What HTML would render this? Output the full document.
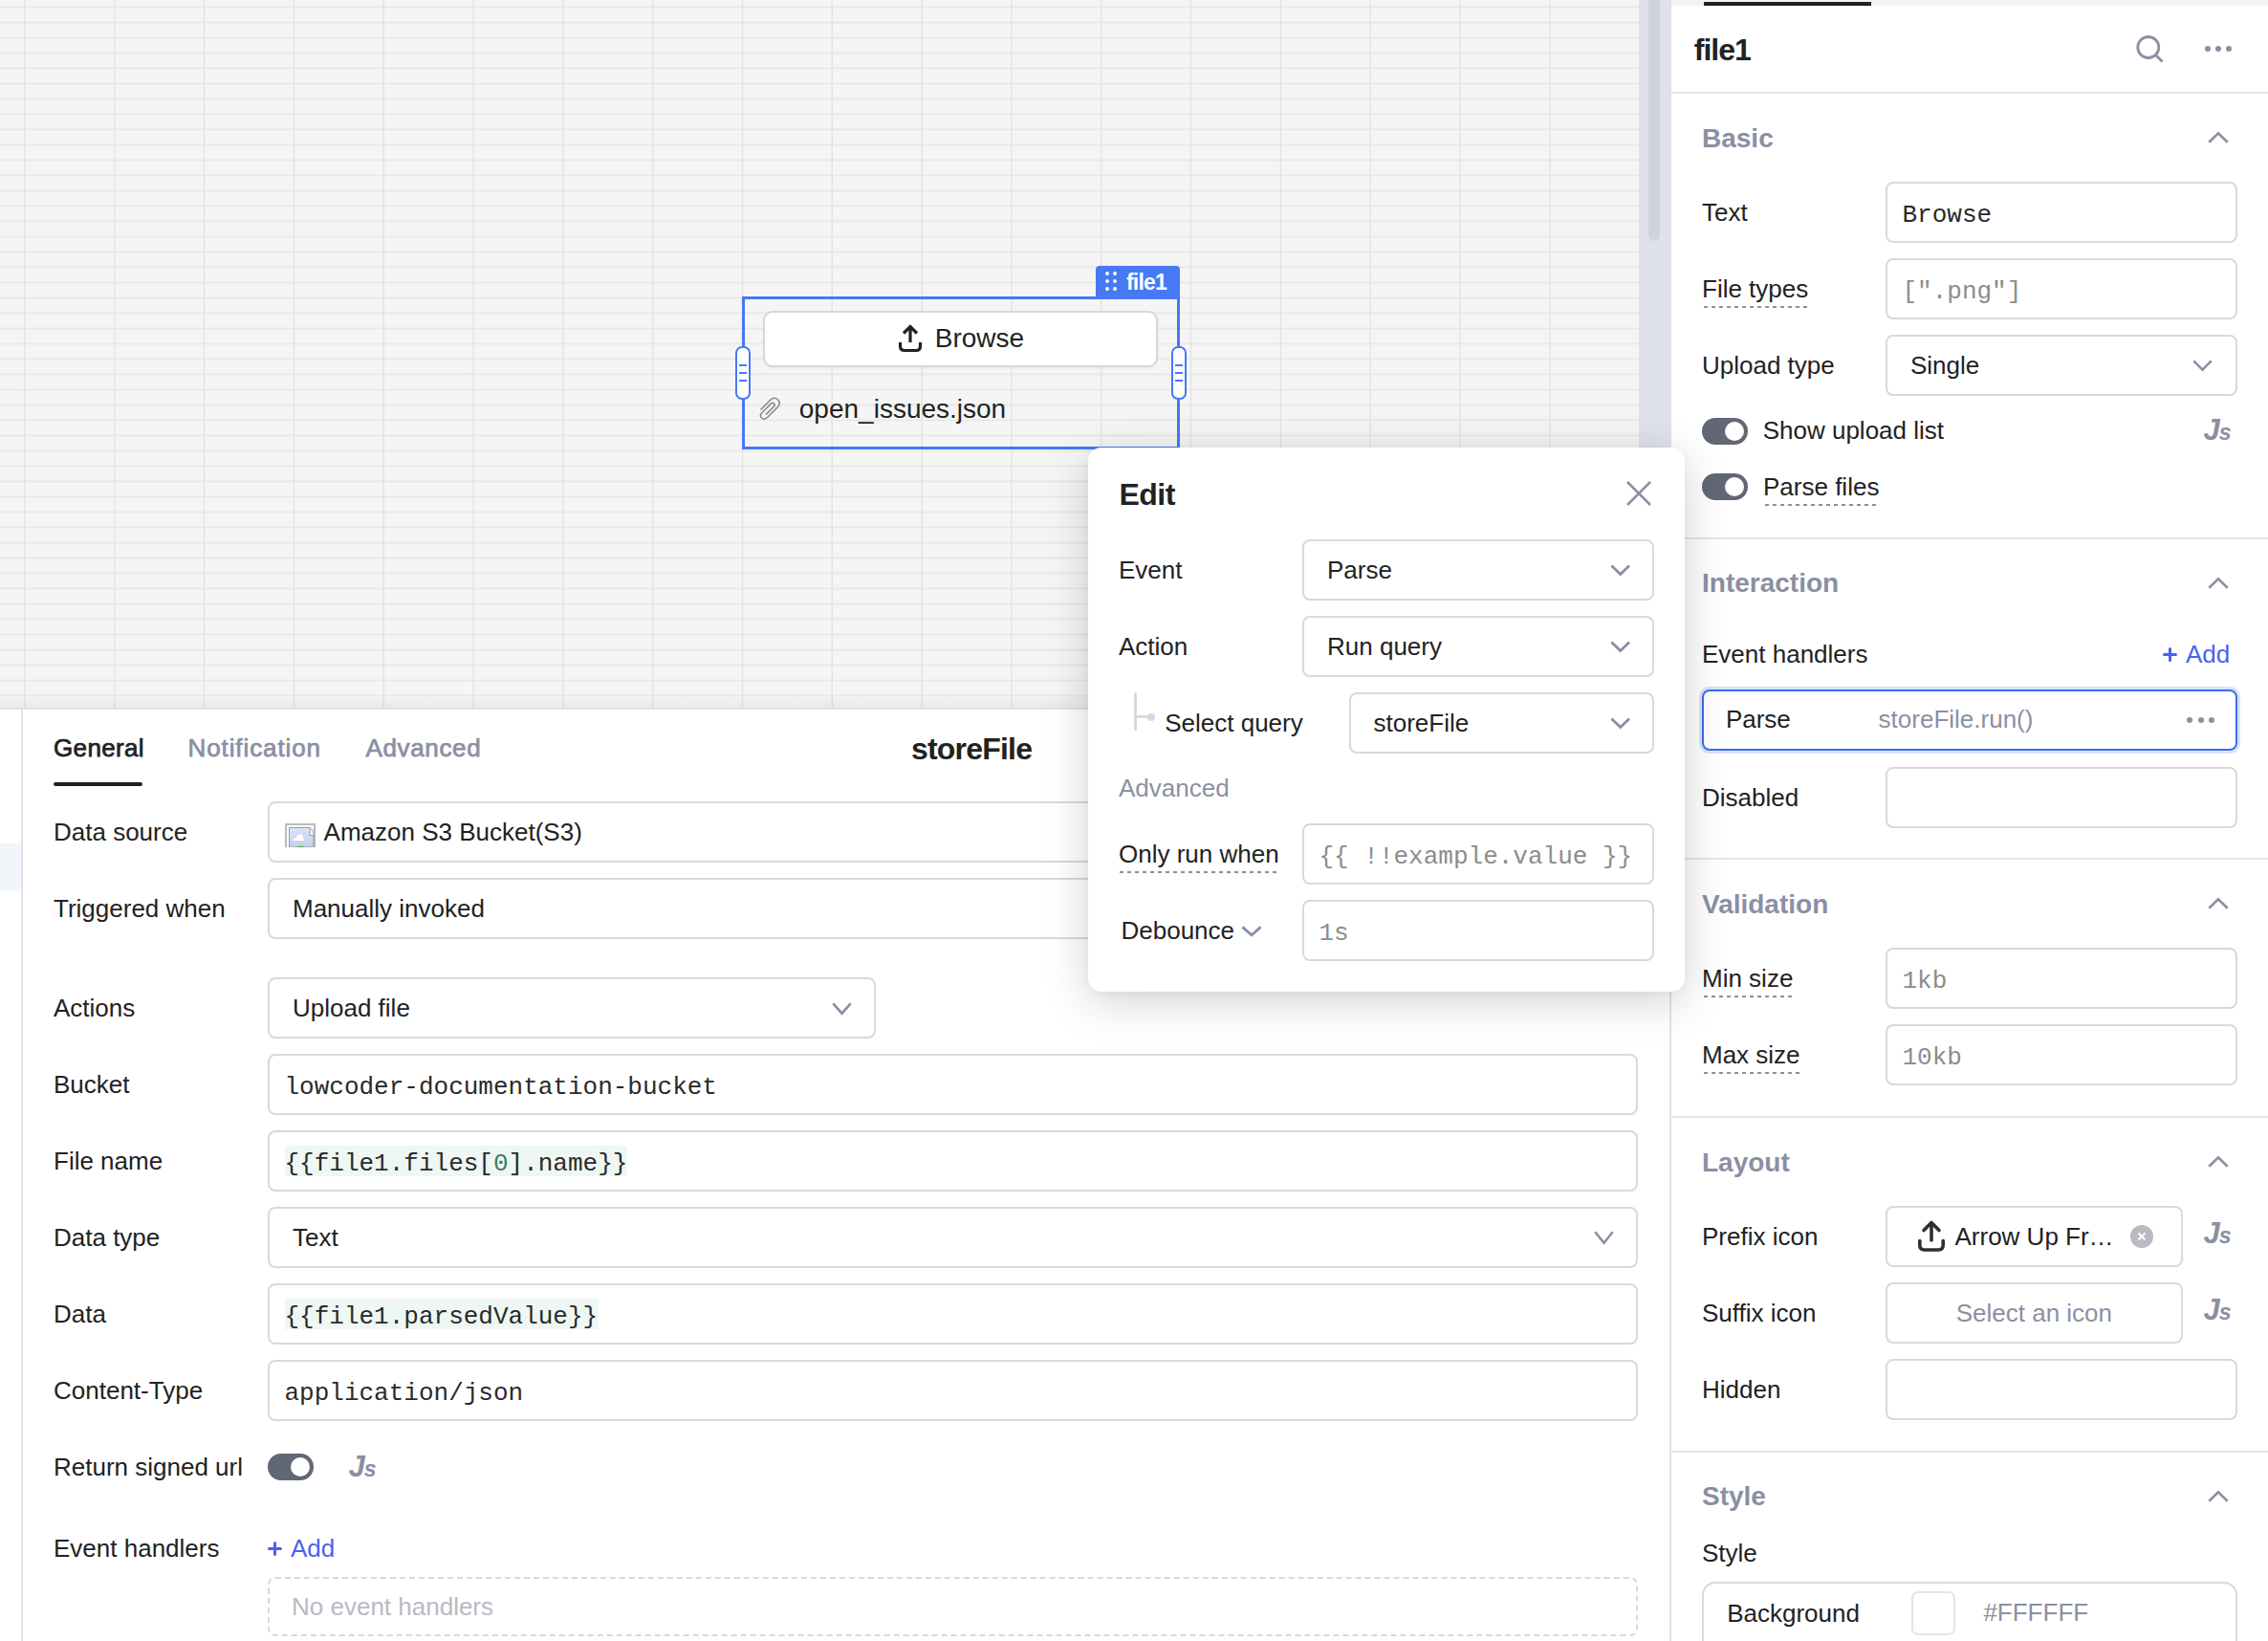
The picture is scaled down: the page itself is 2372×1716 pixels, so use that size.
<!DOCTYPE html><html><head><meta charset="utf-8"><style>html,body{margin:0;padding:0;width:2372px;height:1716px;overflow:hidden;background:#fff;position:relative}</style></head><body>
<div style="position:absolute;left:0.0px;top:0.0px;width:1714.0px;height:741.0px;background:#f5f5f5"></div>
<svg style="position:absolute;left:0;top:0" width="1714" height="741"><rect x="0" y="6.55" width="1714" height="1.8" fill="#e8e8e8"/><rect x="0" y="22.55" width="1714" height="1.8" fill="#e8e8e8"/><rect x="0" y="38.550000000000004" width="1714" height="1.8" fill="#e8e8e8"/><rect x="0" y="54.550000000000004" width="1714" height="1.8" fill="#e8e8e8"/><rect x="0" y="70.55" width="1714" height="1.8" fill="#e8e8e8"/><rect x="0" y="86.55" width="1714" height="1.8" fill="#e8e8e8"/><rect x="0" y="102.55" width="1714" height="1.8" fill="#e8e8e8"/><rect x="0" y="118.55" width="1714" height="1.8" fill="#e8e8e8"/><rect x="0" y="134.54999999999998" width="1714" height="1.8" fill="#e8e8e8"/><rect x="0" y="150.54999999999998" width="1714" height="1.8" fill="#e8e8e8"/><rect x="0" y="166.54999999999998" width="1714" height="1.8" fill="#e8e8e8"/><rect x="0" y="182.54999999999998" width="1714" height="1.8" fill="#e8e8e8"/><rect x="0" y="198.54999999999998" width="1714" height="1.8" fill="#e8e8e8"/><rect x="0" y="214.54999999999998" width="1714" height="1.8" fill="#e8e8e8"/><rect x="0" y="230.54999999999998" width="1714" height="1.8" fill="#e8e8e8"/><rect x="0" y="246.54999999999998" width="1714" height="1.8" fill="#e8e8e8"/><rect x="0" y="262.55" width="1714" height="1.8" fill="#e8e8e8"/><rect x="0" y="278.55" width="1714" height="1.8" fill="#e8e8e8"/><rect x="0" y="294.55" width="1714" height="1.8" fill="#e8e8e8"/><rect x="0" y="310.55" width="1714" height="1.8" fill="#e8e8e8"/><rect x="0" y="326.55" width="1714" height="1.8" fill="#e8e8e8"/><rect x="0" y="342.55" width="1714" height="1.8" fill="#e8e8e8"/><rect x="0" y="358.55" width="1714" height="1.8" fill="#e8e8e8"/><rect x="0" y="374.55" width="1714" height="1.8" fill="#e8e8e8"/><rect x="0" y="390.55" width="1714" height="1.8" fill="#e8e8e8"/><rect x="0" y="406.55" width="1714" height="1.8" fill="#e8e8e8"/><rect x="0" y="422.55" width="1714" height="1.8" fill="#e8e8e8"/><rect x="0" y="438.55" width="1714" height="1.8" fill="#e8e8e8"/><rect x="0" y="454.55" width="1714" height="1.8" fill="#e8e8e8"/><rect x="0" y="470.55" width="1714" height="1.8" fill="#e8e8e8"/><rect x="0" y="486.55" width="1714" height="1.8" fill="#e8e8e8"/><rect x="0" y="502.55" width="1714" height="1.8" fill="#e8e8e8"/><rect x="0" y="518.5500000000001" width="1714" height="1.8" fill="#e8e8e8"/><rect x="0" y="534.5500000000001" width="1714" height="1.8" fill="#e8e8e8"/><rect x="0" y="550.5500000000001" width="1714" height="1.8" fill="#e8e8e8"/><rect x="0" y="566.5500000000001" width="1714" height="1.8" fill="#e8e8e8"/><rect x="0" y="582.5500000000001" width="1714" height="1.8" fill="#e8e8e8"/><rect x="0" y="598.5500000000001" width="1714" height="1.8" fill="#e8e8e8"/><rect x="0" y="614.5500000000001" width="1714" height="1.8" fill="#e8e8e8"/><rect x="0" y="630.5500000000001" width="1714" height="1.8" fill="#e8e8e8"/><rect x="0" y="646.5500000000001" width="1714" height="1.8" fill="#e8e8e8"/><rect x="0" y="662.5500000000001" width="1714" height="1.8" fill="#e8e8e8"/><rect x="0" y="678.5500000000001" width="1714" height="1.8" fill="#e8e8e8"/><rect x="0" y="694.5500000000001" width="1714" height="1.8" fill="#e8e8e8"/><rect x="0" y="710.5500000000001" width="1714" height="1.8" fill="#e8e8e8"/><rect x="0" y="726.5500000000001" width="1714" height="1.8" fill="#e8e8e8"/><rect x="25.30" y="0" width="1.4" height="741" fill="#e3e3e3"/><rect x="119.11" y="0" width="1.4" height="741" fill="#e3e3e3"/><rect x="212.92" y="0" width="1.4" height="741" fill="#e3e3e3"/><rect x="306.73" y="0" width="1.4" height="741" fill="#e3e3e3"/><rect x="400.54" y="0" width="1.4" height="741" fill="#e3e3e3"/><rect x="494.35" y="0" width="1.4" height="741" fill="#e3e3e3"/><rect x="588.16" y="0" width="1.4" height="741" fill="#e3e3e3"/><rect x="681.97" y="0" width="1.4" height="741" fill="#e3e3e3"/><rect x="775.78" y="0" width="1.4" height="741" fill="#e3e3e3"/><rect x="869.59" y="0" width="1.4" height="741" fill="#e3e3e3"/><rect x="963.40" y="0" width="1.4" height="741" fill="#e3e3e3"/><rect x="1057.21" y="0" width="1.4" height="741" fill="#e3e3e3"/><rect x="1151.02" y="0" width="1.4" height="741" fill="#e3e3e3"/><rect x="1244.83" y="0" width="1.4" height="741" fill="#e3e3e3"/><rect x="1338.64" y="0" width="1.4" height="741" fill="#e3e3e3"/><rect x="1432.45" y="0" width="1.4" height="741" fill="#e3e3e3"/><rect x="1526.26" y="0" width="1.4" height="741" fill="#e3e3e3"/><rect x="1620.07" y="0" width="1.4" height="741" fill="#e3e3e3"/></svg>
<div style="position:absolute;left:0.0px;top:726.0px;width:1714.0px;height:14.0px;background:linear-gradient(to bottom,rgba(0,0,0,0),rgba(0,0,0,0.05))"></div>
<div style="position:absolute;left:1714.0px;top:0.0px;width:34.0px;height:741.0px;background:#dfe2ea"></div>
<div style="position:absolute;left:1724.0px;top:0.0px;width:12.0px;height:252.0px;background:#d0d3dc;border-radius:0 0 6px 6px"></div>
<div style="position:absolute;left:776.0px;top:310.0px;width:458.0px;height:160.0px;box-sizing:border-box;border:3px solid #4779f5"></div>
<div style="position:absolute;left:1146.0px;top:278.0px;width:88.0px;height:35.0px;background:#4779f5;border-radius:4px 4px 0 0"></div>
<div style="position:absolute;left:1156.0px;top:284.0px;width:4.0px;height:4.0px;background:#fff;border-radius:50%"></div>
<div style="position:absolute;left:1156.0px;top:292.0px;width:4.0px;height:4.0px;background:#fff;border-radius:50%"></div>
<div style="position:absolute;left:1156.0px;top:300.0px;width:4.0px;height:4.0px;background:#fff;border-radius:50%"></div>
<div style="position:absolute;left:1164.0px;top:284.0px;width:4.0px;height:4.0px;background:#fff;border-radius:50%"></div>
<div style="position:absolute;left:1164.0px;top:292.0px;width:4.0px;height:4.0px;background:#fff;border-radius:50%"></div>
<div style="position:absolute;left:1164.0px;top:300.0px;width:4.0px;height:4.0px;background:#fff;border-radius:50%"></div>
<div style="position:absolute;left:1178.0px;top:281.03px;font-family:'Liberation Sans', sans-serif;font-size:23px;line-height:28px;font-weight:bold;color:#fff;white-space:nowrap;letter-spacing:-0.8px">file1</div>
<div style="position:absolute;left:769.0px;top:362.0px;width:16.0px;height:56.0px;box-sizing:border-box;border:2px solid #4779f5;border-radius:7px;background:#fff"></div>
<div style="position:absolute;left:773.0px;top:381.0px;width:8.0px;height:2.0px;background:#4779f5"></div>
<div style="position:absolute;left:773.0px;top:389.0px;width:8.0px;height:2.0px;background:#4779f5"></div>
<div style="position:absolute;left:773.0px;top:397.0px;width:8.0px;height:2.0px;background:#4779f5"></div>
<div style="position:absolute;left:1225.0px;top:362.0px;width:16.0px;height:56.0px;box-sizing:border-box;border:2px solid #4779f5;border-radius:7px;background:#fff"></div>
<div style="position:absolute;left:1229.0px;top:381.0px;width:8.0px;height:2.0px;background:#4779f5"></div>
<div style="position:absolute;left:1229.0px;top:389.0px;width:8.0px;height:2.0px;background:#4779f5"></div>
<div style="position:absolute;left:1229.0px;top:397.0px;width:8.0px;height:2.0px;background:#4779f5"></div>
<div style="position:absolute;left:798.0px;top:324.5px;width:413.0px;height:59.0px;box-sizing:border-box;border:2px solid #d5d7de;border-radius:10px;background:#fff;box-shadow:0 2px 3px rgba(0,0,0,0.04)"></div>
<svg style="position:absolute;left:938px;top:338px" width="28" height="32"><path d="M14 4 L14 20 M7 10.5 L14 3.5 L21 10.5" fill="none" stroke="#222222" stroke-width="3.2" stroke-linecap="butt"/><path d="M3.5 20 L3.5 24 Q3.5 28.5 8 28.5 L20 28.5 Q24.5 28.5 24.5 24 L24.5 20" fill="none" stroke="#222222" stroke-width="3.2"/></svg>
<div style="position:absolute;left:977.8px;top:336.90px;font-family:'Liberation Sans', sans-serif;font-size:28px;line-height:34px;font-weight:normal;color:#222222;white-space:nowrap;">Browse</div>
<svg style="position:absolute;left:793px;top:414px" width="26" height="28" viewBox="0 0 26 28"><path d="M2.5 14.5 L13 4 Q17 0.5 20.5 4 Q24 7.5 20.5 11.5 L9.5 22.5 Q6 25.5 3.5 23 Q1 20.5 4 17.5 L13.5 8 Q15 6.5 16.5 8 Q18 9.5 16.5 11 L8 19.5" fill="none" stroke="#8a8a8a" stroke-width="1.6"/></svg>
<div style="position:absolute;left:835.8px;top:410.90px;font-family:'Liberation Sans', sans-serif;font-size:28px;line-height:34px;font-weight:normal;color:#222222;white-space:nowrap;">open_issues.json</div>
<div style="position:absolute;left:0.0px;top:741.0px;width:1748.0px;height:975.0px;background:#fff"></div>
<div style="position:absolute;left:0.0px;top:740.0px;width:1748.0px;height:2.0px;background:#dfe2ea"></div>
<div style="position:absolute;left:22.0px;top:742.0px;width:2.0px;height:974.0px;background:#dfe2ea"></div>
<div style="position:absolute;left:0.0px;top:882.0px;width:22.0px;height:50.0px;background:#f2f5fa"></div>
<div style="position:absolute;left:56.0px;top:765.99px;font-family:'Liberation Sans', sans-serif;font-size:26px;line-height:32px;font-weight:normal;color:#222222;white-space:nowrap;letter-spacing:0.35px;-webkit-text-stroke:0.75px #222222">General</div>
<div style="position:absolute;left:196.5px;top:765.99px;font-family:'Liberation Sans', sans-serif;font-size:26px;line-height:32px;font-weight:normal;color:#8b8fa3;white-space:nowrap;letter-spacing:0.9px;-webkit-text-stroke:0.75px #8b8fa3">Notification</div>
<div style="position:absolute;left:382.5px;top:765.99px;font-family:'Liberation Sans', sans-serif;font-size:26px;line-height:32px;font-weight:normal;color:#8b8fa3;white-space:nowrap;letter-spacing:0.65px;-webkit-text-stroke:0.75px #8b8fa3">Advanced</div>
<div style="position:absolute;left:56.0px;top:818.0px;width:93.0px;height:4.0px;background:#222222;border-radius:2px"></div>
<div style="position:absolute;left:953.0px;top:763.91px;font-family:'Liberation Sans', sans-serif;font-size:32px;line-height:39px;font-weight:bold;color:#222222;white-space:nowrap;letter-spacing:-0.8px">storeFile</div>
<div style="position:absolute;left:56.0px;top:853.89px;font-family:'Liberation Sans', sans-serif;font-size:26px;line-height:32px;font-weight:normal;color:#222222;white-space:nowrap;">Data source</div>
<div style="position:absolute;left:280.0px;top:838.0px;width:1433.0px;height:64.0px;box-sizing:border-box;border:2px solid #d7d9e0;border-radius:8px;background:#fff;"></div>
<svg style="position:absolute;left:297px;top:860px" width="34" height="26" viewBox="0 0 34 26"><defs><linearGradient id="dsg" x1="0" y1="0" x2="0" y2="1"><stop offset="0" stop-color="#d9e5f9"/><stop offset="1" stop-color="#c3d0ee"/></linearGradient></defs><path d="M2 26 V2 H32 V26" fill="none" stroke="#bcbcbc" stroke-width="2"/><path d="M5.5 26 V5.5 H27 L31 9.5 V26 Z" fill="url(#dsg)" stroke="#9a9a9a" stroke-width="1"/><path d="M27 5.5 V13.5 H31" fill="#fff" stroke="#9a9a9a" stroke-width="1"/><path d="M9 19 Q10 16 13 15.5 Q14.5 12 17.5 12.5 Q20.5 13 20 17 Q21.5 17.5 21 19 Z" fill="#fff"/><ellipse cx="17.5" cy="26" rx="4.5" ry="1.2" fill="#6aab4a"/></svg>
<div style="position:absolute;left:338.6px;top:853.79px;font-family:'Liberation Sans', sans-serif;font-size:26px;line-height:32px;font-weight:normal;color:#222222;white-space:nowrap;">Amazon S3 Bucket(S3)</div>
<div style="position:absolute;left:56.0px;top:933.89px;font-family:'Liberation Sans', sans-serif;font-size:26px;line-height:32px;font-weight:normal;color:#222222;white-space:nowrap;">Triggered when</div>
<div style="position:absolute;left:280.0px;top:918.0px;width:1433.0px;height:64.0px;box-sizing:border-box;border:2px solid #d7d9e0;border-radius:8px;background:#fff;"></div>
<div style="position:absolute;left:306.0px;top:933.89px;font-family:'Liberation Sans', sans-serif;font-size:26px;line-height:32px;font-weight:normal;color:#222222;white-space:nowrap;">Manually invoked</div>
<div style="position:absolute;left:56.0px;top:1037.89px;font-family:'Liberation Sans', sans-serif;font-size:26px;line-height:32px;font-weight:normal;color:#222222;white-space:nowrap;">Actions</div>
<div style="position:absolute;left:280.0px;top:1022.0px;width:636.0px;height:64.0px;box-sizing:border-box;border:2px solid #d7d9e0;border-radius:8px;background:#fff;"></div>
<div style="position:absolute;left:306.0px;top:1037.89px;font-family:'Liberation Sans', sans-serif;font-size:26px;line-height:32px;font-weight:normal;color:#222222;white-space:nowrap;">Upload file</div>
<svg style="position:absolute;left:868.0px;top:1046.0px" width="25.0" height="17.0"><polyline points="3.3,3.3 12.5,13.7 21.7,3.3" fill="none" stroke="#8b8fa3" stroke-width="2.6"/></svg>
<div style="position:absolute;left:56.0px;top:1117.89px;font-family:'Liberation Sans', sans-serif;font-size:26px;line-height:32px;font-weight:normal;color:#222222;white-space:nowrap;">Bucket</div>
<div style="position:absolute;left:280.0px;top:1102.0px;width:1433.0px;height:64.0px;box-sizing:border-box;border:2px solid #d7d9e0;border-radius:8px;background:#fff;"></div>
<div style="position:absolute;left:297.5px;top:1120.98px;font-family:'Liberation Mono', monospace;font-size:26px;line-height:32px;font-weight:normal;color:#2a2a2a;white-space:nowrap;">lowcoder-documentation-bucket</div>
<div style="position:absolute;left:56.0px;top:1197.89px;font-family:'Liberation Sans', sans-serif;font-size:26px;line-height:32px;font-weight:normal;color:#222222;white-space:nowrap;">File name</div>
<div style="position:absolute;left:280.0px;top:1182.0px;width:1433.0px;height:64.0px;box-sizing:border-box;border:2px solid #d7d9e0;border-radius:8px;background:#fff;"></div>
<div style="position:absolute;left:298.4px;top:1197.6px;width:357.6px;height:32.8px;background:#eef7f3"></div>
<div style="position:absolute;left:297.5px;top:1200.98px;font-family:'Liberation Mono', monospace;font-size:26px;line-height:32px;font-weight:normal;color:#2a2a2a;white-space:nowrap;">{{file1.files[<span style="color:#3a7d5c">0</span>].name}}</div>
<div style="position:absolute;left:56.0px;top:1277.89px;font-family:'Liberation Sans', sans-serif;font-size:26px;line-height:32px;font-weight:normal;color:#222222;white-space:nowrap;">Data type</div>
<div style="position:absolute;left:280.0px;top:1262.0px;width:1433.0px;height:64.0px;box-sizing:border-box;border:2px solid #d7d9e0;border-radius:8px;background:#fff;"></div>
<div style="position:absolute;left:306.0px;top:1277.89px;font-family:'Liberation Sans', sans-serif;font-size:26px;line-height:32px;font-weight:normal;color:#222222;white-space:nowrap;">Text</div>
<svg style="position:absolute;left:1665.0px;top:1285.0px" width="25.0" height="18.0"><polyline points="3.3,3.3 12.5,14.7 21.7,3.3" fill="none" stroke="#8b8fa3" stroke-width="2.6"/></svg>
<div style="position:absolute;left:56.0px;top:1357.89px;font-family:'Liberation Sans', sans-serif;font-size:26px;line-height:32px;font-weight:normal;color:#222222;white-space:nowrap;">Data</div>
<div style="position:absolute;left:280.0px;top:1342.0px;width:1433.0px;height:64.0px;box-sizing:border-box;border:2px solid #d7d9e0;border-radius:8px;background:#fff;"></div>
<div style="position:absolute;left:298.4px;top:1357.6px;width:327.3px;height:32.8px;background:#eef7f3"></div>
<div style="position:absolute;left:297.5px;top:1360.98px;font-family:'Liberation Mono', monospace;font-size:26px;line-height:32px;font-weight:normal;color:#2a2a2a;white-space:nowrap;">{{file1.parsedValue}}</div>
<div style="position:absolute;left:56.0px;top:1437.89px;font-family:'Liberation Sans', sans-serif;font-size:26px;line-height:32px;font-weight:normal;color:#222222;white-space:nowrap;">Content-Type</div>
<div style="position:absolute;left:280.0px;top:1422.0px;width:1433.0px;height:64.0px;box-sizing:border-box;border:2px solid #d7d9e0;border-radius:8px;background:#fff;"></div>
<div style="position:absolute;left:297.5px;top:1440.98px;font-family:'Liberation Mono', monospace;font-size:26px;line-height:32px;font-weight:normal;color:#2a2a2a;white-space:nowrap;">application/json</div>
<div style="position:absolute;left:56.0px;top:1518.29px;font-family:'Liberation Sans', sans-serif;font-size:26px;line-height:32px;font-weight:normal;color:#222222;white-space:nowrap;">Return signed url</div>
<div style="position:absolute;left:280.4px;top:1520.0px;width:48.0px;height:28.0px;background:#626776;border-radius:14px"></div>
<div style="position:absolute;left:304.4px;top:1524.0px;width:20.0px;height:20.0px;background:#fff;border-radius:50%"></div>
<div style="position:absolute;left:364.5px;top:1516.0px;font-family:'Liberation Sans', sans-serif;font-weight:bold;font-style:italic;color:#8b8fa3;white-space:nowrap;line-height:36px"><span style="font-size:31px">J</span><span style="font-size:23px;margin-left:-1px">s</span></div>
<div style="position:absolute;left:56.0px;top:1602.89px;font-family:'Liberation Sans', sans-serif;font-size:26px;line-height:32px;font-weight:normal;color:#222222;white-space:nowrap;">Event handlers</div>
<svg style="position:absolute;left:280.4px;top:1612.0px" width="15" height="15"><path d="M7.5 1.5 V13.5 M1.5 7.5 H13.5" stroke="#4a62ee" stroke-width="3" stroke-linecap="round"/></svg>
<div style="position:absolute;left:304.0px;top:1602.99px;font-family:'Liberation Sans', sans-serif;font-size:26px;line-height:32px;font-weight:normal;color:#4a62ee;white-space:nowrap;">Add</div>
<div style="position:absolute;left:280.0px;top:1649.0px;width:1433.0px;height:62.0px;box-sizing:border-box;border:2px dashed #d7d9e0;border-radius:8px"></div>
<div style="position:absolute;left:305.0px;top:1663.99px;font-family:'Liberation Sans', sans-serif;font-size:26px;line-height:32px;font-weight:normal;color:#b8bac4;white-space:nowrap;">No event handlers</div>
<div style="position:absolute;left:1748.0px;top:0.0px;width:624.0px;height:1716.0px;background:#fff"></div>
<div style="position:absolute;left:1746.0px;top:741.0px;width:2.0px;height:975.0px;background:#dfe2ea"></div>
<div style="position:absolute;left:1748.0px;top:0.0px;width:624.0px;height:6.0px;background:#f3f3f3"></div>
<div style="position:absolute;left:1782.0px;top:2.0px;width:175.0px;height:4.0px;background:#222222"></div>
<div style="position:absolute;left:1771.8px;top:32.51px;font-family:'Liberation Sans', sans-serif;font-size:32px;line-height:39px;font-weight:bold;color:#222222;white-space:nowrap;letter-spacing:-1px">file1</div>
<svg style="position:absolute;left:2230px;top:33px" width="36" height="36"><circle cx="16.8" cy="16.5" r="11" fill="none" stroke="#8b8fa3" stroke-width="2.8"/><line x1="24.5" y1="24.5" x2="31.5" y2="31.5" stroke="#8b8fa3" stroke-width="2.8"/></svg>
<div style="position:absolute;left:2306.0px;top:48.0px;width:6.0px;height:6.0px;background:#8b8fa3;border-radius:50%"></div>
<div style="position:absolute;left:2317.0px;top:48.0px;width:6.0px;height:6.0px;background:#8b8fa3;border-radius:50%"></div>
<div style="position:absolute;left:2328.0px;top:48.0px;width:6.0px;height:6.0px;background:#8b8fa3;border-radius:50%"></div>
<div style="position:absolute;left:1748.0px;top:96.0px;width:624.0px;height:2.0px;background:#e4e6ec"></div>
<div style="position:absolute;left:1780.0px;top:128.10px;font-family:'Liberation Sans', sans-serif;font-size:28px;line-height:34px;font-weight:bold;color:#8b8fa3;white-space:nowrap;">Basic</div>
<svg style="position:absolute;left:2307.0px;top:135.5px" width="26.0" height="16.0"><polyline points="3.3,12.7 13.0,3.3 22.7,12.7" fill="none" stroke="#8b8fa3" stroke-width="2.6"/></svg>
<div style="position:absolute;left:1780.0px;top:205.89px;font-family:'Liberation Sans', sans-serif;font-size:26px;line-height:32px;font-weight:normal;color:#222222;white-space:nowrap;">Text</div>
<div style="position:absolute;left:1972.0px;top:190.0px;width:367.5px;height:64.0px;box-sizing:border-box;border:2px solid #d7d9e0;border-radius:8px;background:#fff;"></div>
<div style="position:absolute;left:1989.5px;top:208.98px;font-family:'Liberation Mono', monospace;font-size:26px;line-height:32px;font-weight:normal;color:#2a2a2a;white-space:nowrap;">Browse</div>
<div style="position:absolute;left:1780.0px;top:285.89px;font-family:'Liberation Sans', sans-serif;font-size:26px;line-height:32px;font-weight:normal;color:#222222;white-space:nowrap;">File types</div>
<div style="position:absolute;left:1972.0px;top:270.0px;width:367.5px;height:64.0px;box-sizing:border-box;border:2px solid #d7d9e0;border-radius:8px;background:#fff;"></div>
<div style="position:absolute;left:1782.0px;top:320.0px;width:108.5px;height:2px;background-image:linear-gradient(to right,#8b8fa3 50%,transparent 50%);background-size:8px 2px;background-repeat:repeat-x"></div>
<div style="position:absolute;left:1989.5px;top:288.98px;font-family:'Liberation Mono', monospace;font-size:26px;line-height:32px;font-weight:normal;color:#8c8c8c;white-space:nowrap;">[".png"]</div>
<div style="position:absolute;left:1780.0px;top:365.89px;font-family:'Liberation Sans', sans-serif;font-size:26px;line-height:32px;font-weight:normal;color:#222222;white-space:nowrap;">Upload type</div>
<div style="position:absolute;left:1972.0px;top:350.0px;width:367.5px;height:64.0px;box-sizing:border-box;border:2px solid #d7d9e0;border-radius:8px;background:#fff;"></div>
<div style="position:absolute;left:1998.0px;top:365.89px;font-family:'Liberation Sans', sans-serif;font-size:26px;line-height:32px;font-weight:normal;color:#222222;white-space:nowrap;">Single</div>
<svg style="position:absolute;left:2291.0px;top:374.4px" width="25.0" height="16.0"><polyline points="3.3,3.3 12.5,12.7 21.7,3.3" fill="none" stroke="#8b8fa3" stroke-width="2.6"/></svg>
<div style="position:absolute;left:1780.0px;top:437.0px;width:48.0px;height:28.0px;background:#626776;border-radius:14px"></div>
<div style="position:absolute;left:1804.0px;top:441.0px;width:20.0px;height:20.0px;background:#fff;border-radius:50%"></div>
<div style="position:absolute;left:1843.7px;top:434.49px;font-family:'Liberation Sans', sans-serif;font-size:26px;line-height:32px;font-weight:normal;color:#222222;white-space:nowrap;">Show upload list</div>
<div style="position:absolute;left:2304.6px;top:432.0px;font-family:'Liberation Sans', sans-serif;font-weight:bold;font-style:italic;color:#8b8fa3;white-space:nowrap;line-height:36px"><span style="font-size:31px">J</span><span style="font-size:23px;margin-left:-1px">s</span></div>
<div style="position:absolute;left:1780.0px;top:495.0px;width:48.0px;height:28.0px;background:#626776;border-radius:14px"></div>
<div style="position:absolute;left:1804.0px;top:499.0px;width:20.0px;height:20.0px;background:#fff;border-radius:50%"></div>
<div style="position:absolute;left:1844.0px;top:492.79px;font-family:'Liberation Sans', sans-serif;font-size:26px;line-height:32px;font-weight:normal;color:#222222;white-space:nowrap;">Parse files</div>
<div style="position:absolute;left:1846.0px;top:526.5px;width:116.0px;height:2px;background-image:linear-gradient(to right,#8b8fa3 50%,transparent 50%);background-size:8px 2px;background-repeat:repeat-x"></div>
<div style="position:absolute;left:1748.0px;top:562.0px;width:624.0px;height:2.0px;background:#e4e6ec"></div>
<div style="position:absolute;left:1780.0px;top:593.30px;font-family:'Liberation Sans', sans-serif;font-size:28px;line-height:34px;font-weight:bold;color:#8b8fa3;white-space:nowrap;">Interaction</div>
<svg style="position:absolute;left:2307.0px;top:601.7px" width="26.0" height="16.0"><polyline points="3.3,12.7 13.0,3.3 22.7,12.7" fill="none" stroke="#8b8fa3" stroke-width="2.6"/></svg>
<div style="position:absolute;left:1780.0px;top:667.89px;font-family:'Liberation Sans', sans-serif;font-size:26px;line-height:32px;font-weight:normal;color:#222222;white-space:nowrap;">Event handlers</div>
<svg style="position:absolute;left:2262.4px;top:676.9px" width="15" height="15"><path d="M7.5 1.5 V13.5 M1.5 7.5 H13.5" stroke="#4a62ee" stroke-width="3" stroke-linecap="round"/></svg>
<div style="position:absolute;left:2286.0px;top:667.89px;font-family:'Liberation Sans', sans-serif;font-size:26px;line-height:32px;font-weight:normal;color:#4a62ee;white-space:nowrap;">Add</div>
<div style="position:absolute;left:1777.0px;top:718.0px;width:566.0px;height:70.0px;border-radius:11px;background:#d9e4fc"></div>
<div style="position:absolute;left:1780.4px;top:721.0px;width:559.2px;height:64.0px;box-sizing:border-box;border:2px solid #3a6cf4;border-radius:8px;background:#fff"></div>
<div style="position:absolute;left:1804.9px;top:736.19px;font-family:'Liberation Sans', sans-serif;font-size:26px;line-height:32px;font-weight:normal;color:#222222;white-space:nowrap;">Parse</div>
<div style="position:absolute;left:1964.6px;top:736.19px;font-family:'Liberation Sans', sans-serif;font-size:26px;line-height:32px;font-weight:normal;color:#8b8fa3;white-space:nowrap;">storeFile.run()</div>
<div style="position:absolute;left:2287.0px;top:750.0px;width:6.0px;height:6.0px;background:#8b8fa3;border-radius:50%"></div>
<div style="position:absolute;left:2298.5px;top:750.0px;width:6.0px;height:6.0px;background:#8b8fa3;border-radius:50%"></div>
<div style="position:absolute;left:2310.0px;top:750.0px;width:6.0px;height:6.0px;background:#8b8fa3;border-radius:50%"></div>
<div style="position:absolute;left:1780.0px;top:817.89px;font-family:'Liberation Sans', sans-serif;font-size:26px;line-height:32px;font-weight:normal;color:#222222;white-space:nowrap;">Disabled</div>
<div style="position:absolute;left:1972.0px;top:802.0px;width:367.5px;height:64.0px;box-sizing:border-box;border:2px solid #d7d9e0;border-radius:8px;background:#fff;"></div>
<div style="position:absolute;left:1748.0px;top:897.0px;width:624.0px;height:2.0px;background:#e4e6ec"></div>
<div style="position:absolute;left:1780.0px;top:928.80px;font-family:'Liberation Sans', sans-serif;font-size:28px;line-height:34px;font-weight:bold;color:#8b8fa3;white-space:nowrap;">Validation</div>
<svg style="position:absolute;left:2307.0px;top:936.8px" width="26.0" height="16.0"><polyline points="3.3,12.7 13.0,3.3 22.7,12.7" fill="none" stroke="#8b8fa3" stroke-width="2.6"/></svg>
<div style="position:absolute;left:1780.0px;top:1006.89px;font-family:'Liberation Sans', sans-serif;font-size:26px;line-height:32px;font-weight:normal;color:#222222;white-space:nowrap;">Min size</div>
<div style="position:absolute;left:1972.0px;top:991.0px;width:367.5px;height:64.0px;box-sizing:border-box;border:2px solid #d7d9e0;border-radius:8px;background:#fff;"></div>
<div style="position:absolute;left:1782.0px;top:1041.0px;width:92.0px;height:2px;background-image:linear-gradient(to right,#8b8fa3 50%,transparent 50%);background-size:8px 2px;background-repeat:repeat-x"></div>
<div style="position:absolute;left:1989.5px;top:1010.28px;font-family:'Liberation Mono', monospace;font-size:26px;line-height:32px;font-weight:normal;color:#8c8c8c;white-space:nowrap;">1kb</div>
<div style="position:absolute;left:1780.0px;top:1086.89px;font-family:'Liberation Sans', sans-serif;font-size:26px;line-height:32px;font-weight:normal;color:#222222;white-space:nowrap;">Max size</div>
<div style="position:absolute;left:1972.0px;top:1071.0px;width:367.5px;height:64.0px;box-sizing:border-box;border:2px solid #d7d9e0;border-radius:8px;background:#fff;"></div>
<div style="position:absolute;left:1782.0px;top:1120.5px;width:100.0px;height:2px;background-image:linear-gradient(to right,#8b8fa3 50%,transparent 50%);background-size:8px 2px;background-repeat:repeat-x"></div>
<div style="position:absolute;left:1989.5px;top:1090.28px;font-family:'Liberation Mono', monospace;font-size:26px;line-height:32px;font-weight:normal;color:#8c8c8c;white-space:nowrap;">10kb</div>
<div style="position:absolute;left:1748.0px;top:1166.5px;width:624.0px;height:2.0px;background:#e4e6ec"></div>
<div style="position:absolute;left:1780.0px;top:1198.80px;font-family:'Liberation Sans', sans-serif;font-size:28px;line-height:34px;font-weight:bold;color:#8b8fa3;white-space:nowrap;">Layout</div>
<svg style="position:absolute;left:2307.0px;top:1206.8px" width="26.0" height="16.0"><polyline points="3.3,12.7 13.0,3.3 22.7,12.7" fill="none" stroke="#8b8fa3" stroke-width="2.6"/></svg>
<div style="position:absolute;left:1780.0px;top:1276.89px;font-family:'Liberation Sans', sans-serif;font-size:26px;line-height:32px;font-weight:normal;color:#222222;white-space:nowrap;">Prefix icon</div>
<div style="position:absolute;left:1972.0px;top:1261.0px;width:311.3px;height:64.0px;box-sizing:border-box;border:2px solid #d7d9e0;border-radius:8px;background:#fff;"></div>
<svg style="position:absolute;left:2004px;top:1275px" width="32" height="36"><path d="M16 4 L16 22 M8 11.5 L16 3.5 L24 11.5" fill="none" stroke="#2f2f2f" stroke-width="3.6" stroke-linecap="round" stroke-linejoin="round"/><path d="M3.8 22.5 L3.8 27 Q3.8 32 8.8 32 L23.2 32 Q28.2 32 28.2 27 L28.2 22.5" fill="none" stroke="#2f2f2f" stroke-width="3.6" stroke-linecap="round"/></svg>
<div style="position:absolute;left:2044.5px;top:1276.99px;font-family:'Liberation Sans', sans-serif;font-size:26px;line-height:32px;font-weight:normal;color:#222222;white-space:nowrap;">Arrow Up Fr…</div>
<div style="position:absolute;left:2228.0px;top:1281.0px;width:24.0px;height:24.0px;background:#b9bbc3;border-radius:50%"></div>
<svg style="position:absolute;left:2228px;top:1281px" width="24" height="24"><path d="M8.5 8.5 L15.5 15.5 M15.5 8.5 L8.5 15.5" stroke="#fff" stroke-width="2"/></svg>
<div style="position:absolute;left:2304.6px;top:1272.0px;font-family:'Liberation Sans', sans-serif;font-weight:bold;font-style:italic;color:#8b8fa3;white-space:nowrap;line-height:36px"><span style="font-size:31px">J</span><span style="font-size:23px;margin-left:-1px">s</span></div>
<div style="position:absolute;left:1780.0px;top:1356.89px;font-family:'Liberation Sans', sans-serif;font-size:26px;line-height:32px;font-weight:normal;color:#222222;white-space:nowrap;">Suffix icon</div>
<div style="position:absolute;left:1972.0px;top:1341.0px;width:311.3px;height:64.0px;box-sizing:border-box;border:2px solid #d7d9e0;border-radius:8px;background:#fff;"></div>
<div style="position:absolute;left:2045.7px;top:1356.99px;font-family:'Liberation Sans', sans-serif;font-size:26px;line-height:32px;font-weight:normal;color:#8b8fa3;white-space:nowrap;">Select an icon</div>
<div style="position:absolute;left:2304.6px;top:1352.0px;font-family:'Liberation Sans', sans-serif;font-weight:bold;font-style:italic;color:#8b8fa3;white-space:nowrap;line-height:36px"><span style="font-size:31px">J</span><span style="font-size:23px;margin-left:-1px">s</span></div>
<div style="position:absolute;left:1780.0px;top:1436.89px;font-family:'Liberation Sans', sans-serif;font-size:26px;line-height:32px;font-weight:normal;color:#222222;white-space:nowrap;">Hidden</div>
<div style="position:absolute;left:1972.0px;top:1421.0px;width:367.5px;height:64.0px;box-sizing:border-box;border:2px solid #d7d9e0;border-radius:8px;background:#fff;"></div>
<div style="position:absolute;left:1748.0px;top:1516.5px;width:624.0px;height:2.0px;background:#e4e6ec"></div>
<div style="position:absolute;left:1780.0px;top:1548.30px;font-family:'Liberation Sans', sans-serif;font-size:28px;line-height:34px;font-weight:bold;color:#8b8fa3;white-space:nowrap;">Style</div>
<svg style="position:absolute;left:2307.0px;top:1556.9px" width="26.0" height="16.0"><polyline points="3.3,12.7 13.0,3.3 22.7,12.7" fill="none" stroke="#8b8fa3" stroke-width="2.6"/></svg>
<div style="position:absolute;left:1780.0px;top:1607.69px;font-family:'Liberation Sans', sans-serif;font-size:26px;line-height:32px;font-weight:normal;color:#222222;white-space:nowrap;">Style</div>
<div style="position:absolute;left:1780.0px;top:1654.0px;width:559.5px;height:86.0px;box-sizing:border-box;border:2px solid #d7d9e0;border-radius:14px;background:#fff"></div>
<div style="position:absolute;left:1806.2px;top:1671.39px;font-family:'Liberation Sans', sans-serif;font-size:26px;line-height:32px;font-weight:normal;color:#222222;white-space:nowrap;">Background</div>
<div style="position:absolute;left:1998.6px;top:1664.0px;width:46.4px;height:46.0px;box-sizing:border-box;border:2px solid #e3e4e9;border-radius:7px;background:#fff"></div>
<div style="position:absolute;left:2074.4px;top:1670.39px;font-family:'Liberation Sans', sans-serif;font-size:26px;line-height:32px;font-weight:normal;color:#8b8fa3;white-space:nowrap;">#FFFFFF</div>
<div style="position:absolute;left:1138.0px;top:468.0px;width:624.0px;height:569.0px;background:#fff;border-radius:14px;box-shadow:0 10px 48px rgba(0,0,0,0.18),0 2px 8px rgba(0,0,0,0.04)"></div>
<div style="position:absolute;left:1170.4px;top:498.41px;font-family:'Liberation Sans', sans-serif;font-size:32px;line-height:39px;font-weight:bold;color:#222222;white-space:nowrap;letter-spacing:-0.5px">Edit</div>
<svg style="position:absolute;left:1699px;top:501px" width="30" height="30"><path d="M3 3 L27 27 M27 3 L3 27" stroke="#8b8fa3" stroke-width="2.6"/></svg>
<div style="position:absolute;left:1170.0px;top:579.89px;font-family:'Liberation Sans', sans-serif;font-size:26px;line-height:32px;font-weight:normal;color:#222222;white-space:nowrap;">Event</div>
<div style="position:absolute;left:1362.0px;top:564.0px;width:367.5px;height:64.0px;box-sizing:border-box;border:2px solid #d7d9e0;border-radius:8px;background:#fff;"></div>
<div style="position:absolute;left:1388.0px;top:579.89px;font-family:'Liberation Sans', sans-serif;font-size:26px;line-height:32px;font-weight:normal;color:#222222;white-space:nowrap;">Parse</div>
<svg style="position:absolute;left:1681.5px;top:588.3px" width="25.4" height="16.0"><polyline points="3.4,3.4 12.7,12.6 22.0,3.4" fill="none" stroke="#8b8fa3" stroke-width="2.8"/></svg>
<div style="position:absolute;left:1170.0px;top:659.89px;font-family:'Liberation Sans', sans-serif;font-size:26px;line-height:32px;font-weight:normal;color:#222222;white-space:nowrap;">Action</div>
<div style="position:absolute;left:1362.0px;top:644.0px;width:367.5px;height:64.0px;box-sizing:border-box;border:2px solid #d7d9e0;border-radius:8px;background:#fff;"></div>
<div style="position:absolute;left:1388.0px;top:659.89px;font-family:'Liberation Sans', sans-serif;font-size:26px;line-height:32px;font-weight:normal;color:#222222;white-space:nowrap;">Run query</div>
<svg style="position:absolute;left:1681.5px;top:668.3px" width="25.4" height="16.0"><polyline points="3.4,3.4 12.7,12.6 22.0,3.4" fill="none" stroke="#8b8fa3" stroke-width="2.8"/></svg>
<div style="position:absolute;left:1410.5px;top:724.0px;width:319.0px;height:64.0px;box-sizing:border-box;border:2px solid #d7d9e0;border-radius:8px;background:#fff;"></div>
<div style="position:absolute;left:1436.5px;top:739.89px;font-family:'Liberation Sans', sans-serif;font-size:26px;line-height:32px;font-weight:normal;color:#222222;white-space:nowrap;">storeFile</div>
<svg style="position:absolute;left:1681.5px;top:748.3px" width="25.4" height="16.0"><polyline points="3.4,3.4 12.7,12.6 22.0,3.4" fill="none" stroke="#8b8fa3" stroke-width="2.8"/></svg>
<div style="position:absolute;left:1218.2px;top:739.79px;font-family:'Liberation Sans', sans-serif;font-size:26px;line-height:32px;font-weight:normal;color:#222222;white-space:nowrap;">Select query</div>
<div style="position:absolute;left:1186.2px;top:724.0px;width:2.7px;height:40.0px;background:#d7d9e0;border-radius:1.5px"></div>
<div style="position:absolute;left:1188.0px;top:748.4px;width:14.0px;height:3.0px;background:#d7d9e0"></div>
<div style="position:absolute;left:1200.2px;top:746.1px;width:7.6px;height:7.6px;background:#d7d9e0;border-radius:50%"></div>
<div style="position:absolute;left:1170.0px;top:808.49px;font-family:'Liberation Sans', sans-serif;font-size:26px;line-height:32px;font-weight:normal;color:#8b8fa3;white-space:nowrap;">Advanced</div>
<div style="position:absolute;left:1170.0px;top:876.89px;font-family:'Liberation Sans', sans-serif;font-size:26px;line-height:32px;font-weight:normal;color:#222222;white-space:nowrap;">Only run when</div>
<div style="position:absolute;left:1362.0px;top:861.0px;width:367.5px;height:64.0px;box-sizing:border-box;border:2px solid #d7d9e0;border-radius:8px;background:#fff;"></div>
<div style="position:absolute;left:1171.0px;top:911.0px;width:165.0px;height:2px;background-image:linear-gradient(to right,#8b8fa3 50%,transparent 50%);background-size:8px 2px;background-repeat:repeat-x"></div>
<div style="position:absolute;left:1379.5px;top:879.58px;font-family:'Liberation Mono', monospace;font-size:26px;line-height:32px;font-weight:normal;color:#8c8c8c;white-space:nowrap;">{{ !!example.value }}</div>
<div style="position:absolute;left:1172.5px;top:956.89px;font-family:'Liberation Sans', sans-serif;font-size:26px;line-height:32px;font-weight:normal;color:#222222;white-space:nowrap;">Debounce</div>
<div style="position:absolute;left:1362.0px;top:941.0px;width:367.5px;height:64.0px;box-sizing:border-box;border:2px solid #d7d9e0;border-radius:8px;background:#fff;"></div>
<svg style="position:absolute;left:1296.0px;top:965.7px" width="26.0" height="15.3"><polyline points="3.4,3.4 13.0,11.9 22.6,3.4" fill="none" stroke="#8b8fa3" stroke-width="2.8"/></svg>
<div style="position:absolute;left:1379.5px;top:959.78px;font-family:'Liberation Mono', monospace;font-size:26px;line-height:32px;font-weight:normal;color:#8c8c8c;white-space:nowrap;">1s</div>
</body></html>
